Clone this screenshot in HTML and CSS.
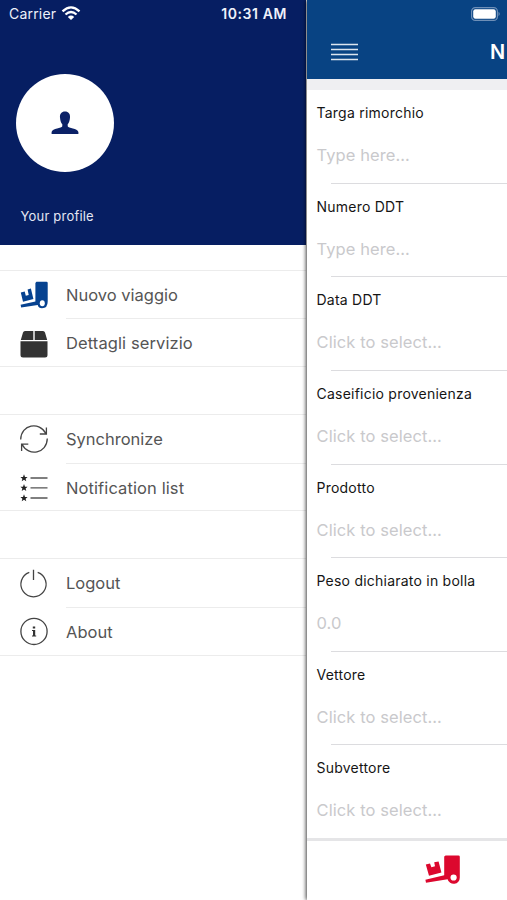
FILE: index.html
```html
<!DOCTYPE html>
<html lang="it">
<head>
<meta charset="utf-8">
<title>Nuovo viaggio</title>
<link rel="stylesheet" href="styles.css">
</head>
<body>
<div class="app">
  <aside class="drawer">
    <header class="profile">
      <div class="status"><span class="carrier">Carrier</span>
        <svg class="wifi" width="20" height="15" viewBox="0 0 20 15" fill="none" stroke="#fff" stroke-width="2.3"><path d="M1.5 5.3Q10-2.5 18.5 5.3"/><path d="M4.5 8.5Q10 3.5 15.5 8.5"/><path d="M10 14L6.8 10.9Q10 8.3 13.2 10.9Z" fill="#fff" stroke="none"/></svg>
        <span class="time">10:31 AM</span></div>
      <div class="avatar"><svg width="28" height="24" viewBox="0 0 28 24"><path fill="#0b2167" d="M14 .5C17.5.5 19.3 3 19 6.5C18.8 10 17.8 12 16.7 13.3V15.2C17.2 17.4 26.5 17 27.4 21V23H.6V21C1.5 17 10.8 17.4 11.3 15.2V13.3C10.2 12 9.2 10 9 6.5C8.7 3 10.5.5 14 .5Z"/></svg></div>
      <p class="profile-name">Your profile</p>
    </header>
    <nav class="menu">
      <ul class="group">
        <li><svg class="icon blue" viewBox="0 0 28 28"><path fill="currentColor" d="M15.4 2 L16.4.8 H26.5 Q27.7.8 27.7 2 V20.5 Q27.7 27.3 22 27.3 Q18.6 27.3 17.7 24 L1.2 26.6 L.6 23.8 L15.4 20.5Z M.8 11.6 L4.7 10.6 L5.8 14.7 L8.7 13.9 L7.6 8.4 L10.9 7.6 L13.4 18 L3 20.8Z"/><ellipse cx="22.3" cy="22.3" rx="2.5" ry="3" fill="#fff"/></svg><span>Nuovo viaggio</span></li>
        <li><svg class="icon" viewBox="0 0 28 28" fill="#333"><path d="M5 1H13.3V10H.8L3 2.6Q3.5 1 5 1ZM14.7 1H23Q24.5 1 25 2.6L27.2 10H14.7ZM.5 11.3H27.5V25Q27.5 27.5 25 27.5H3Q.5 27.5.5 25Z"/></svg><span class="wide">Dettagli servizio</span></li>
      </ul>
      <ul class="group">
        <li><svg class="icon" viewBox="0 0 28 28" fill="none" stroke="#444" stroke-width="1.3"><path d="M.7 14.5C1-.5 19.5-4.2 26 8.8M27.3 13.5C27 28.5 8.5 32.2 2 19.2M26.4 2.5V9H19.8M1.6 26V19.2H8.3"/></svg><span>Synchronize</span></li>
        <li><svg class="icon" viewBox="0 0 28 28"><path d="M10.5 4H27.5M10.5 13.8H27.5M10.5 24H27.5" stroke="#555" stroke-width="1.3"/><g fill="#222"><path id="star" d="M4 .3L5 2.9L7.6 3L5.6 4.7L6.3 7.3L4 5.8L1.7 7.3L2.4 4.7L.4 3L3 2.9Z"/><use href="#star" y="9.8"/><use href="#star" y="20"/></g></svg><span class="wide">Notification list</span></li>
      </ul>
      <ul class="group">
        <li><svg class="icon" viewBox="0 0 28 28" fill="none" stroke="#444" stroke-width="1.3"><path d="M9.3 2.3A12.6 12.6 0 1 0 17.7 2.3M13.5-.3V10"/></svg><span>Logout</span></li>
        <li><svg class="icon" viewBox="0 0 28 28"><g transform="translate(0 -.6)"><circle cx="14" cy="14" r="13.1" fill="none" stroke="#444" stroke-width="1.3"/><path fill="#333" d="M12.8 9H15.2V11.2H12.8ZM12 12.5H15.2V18H16.2V19H12V18H13V13.5H12Z"/></g></svg><span>About</span></li>
      </ul>
    </nav>
  </aside>
  <main class="page">
    <header class="navbar">
      <svg class="battery" width="30" height="14" viewBox="0 0 30 14"><rect x=".6" y=".6" width="25.8" height="12.8" rx="3.7" fill="none" stroke="#6e8fb7" stroke-width="1.2"/><rect x="2.2" y="2.2" width="22.6" height="9.6" rx="2.2" fill="#fff"/><path d="M27.5 4.8Q30 7 27.5 9.2Z" fill="#6e8fb7"/></svg>
      <div class="bar"><svg width="28" height="18" viewBox="0 0 28 18"><path d="M0 1.5H27M0 6.5H27M0 11.5H27M0 16.5H27" stroke="#dce5ef" stroke-width="1.5"/></svg><h1>N</h1></div>
    </header>
    <form class="fields">
      <div class="field"><label>Targa rimorchio</label><p>Type here...</p></div>
      <div class="field"><label>Numero DDT</label><p>Type here...</p></div>
      <div class="field"><label>Data DDT</label><p>Click to select...</p></div>
      <div class="field"><label>Caseificio provenienza</label><p>Click to select...</p></div>
      <div class="field"><label>Prodotto</label><p>Click to select...</p></div>
      <div class="field"><label>Peso dichiarato in bolla</label><p>0.0</p></div>
      <div class="field"><label>Vettore</label><p>Click to select...</p></div>
      <div class="field"><label>Subvettore</label><p>Click to select...</p></div>
    </form>
    <footer class="tabbar"><svg width="36" height="30" viewBox="0 0 36 30"><path fill="#dc082e" d="M19.2 1.6L20.6.4H33.4Q34.8.4 34.8 1.8V22.5A6.2 6.2 0 0 1 22.6 24.2L1 27.8L.4 24.8L19.2 20.2ZM.8 9.6L5 8.4L6.4 12.2L10 11.2L9.2 7.2L13.6 6.4L16.4 17.4L4 20.8Z"/><circle cx="28.6" cy="22.5" r="3.1" fill="#fff"/></svg></footer>
  </main>
</div>
</body>
</html>
```
FILE: styles.css
```css
* { box-sizing: border-box; margin: 0; padding: 0; }
body { font-family: Inter, "Liberation Sans", sans-serif; background: #fff; overflow: hidden; }
.app { display: flex; width: 507px; height: 900px; overflow: hidden; }
.drawer { width: 306px; flex: none; background: #fff; }
.profile { height: 245px; background: #061e62; color: #fff; }
.status { display: flex; align-items: center; height: 27px; padding: 0 19px 0 9px; font-size: 14px; color: #eef1fa; }
.carrier { letter-spacing: .2px; }
.wifi { margin-left: 5px; margin-top: -1px; }
.time { margin-left: auto; font-weight: 600; font-size: 14px; letter-spacing: .6px; }
.avatar { width: 98px; height: 98px; margin: 47px 0 0 15.5px; border-radius: 50%; background: #fff; display: flex; align-items: center; justify-content: center; }
.profile-name { margin: 35px 0 0 20.5px; font-size: 13px; line-height: 18px; letter-spacing: .2px; color: #e3e7f3; }
.menu { display: flex; flex-direction: column; gap: 47px; padding-top: 24.5px; }
.group { list-style: none; border-top: 1px solid #ececec; border-bottom: 1px solid #ececec; height: 97.4px; }
.group li { display: flex; align-items: center; height: 48.7px; padding-left: 20px; }
.group li span { flex: 1; margin-left: 18px; height: 48.7px; line-height: 49px; font-size: 16.5px; color: #555; }
.group li .wide { letter-spacing: .1px; }
.group li:first-child span { border-bottom: 1px solid #ececec; }
.icon { width: 28px; height: 28px; flex: none; overflow: visible; }
.blue { color: #064290; }
.page { position: relative; width: 200.5px; margin-left: .5px; flex: none; display: flex; flex-direction: column; background: #fff; box-shadow: -1px 0 4px rgba(0, 0, 0, .75); }
.navbar { height: 79px; background: #084383; flex: none; }
.battery { display: block; margin: 6.5px 0 0 164px; }
.bar { display: flex; align-items: center; margin-top: 16.5px; height: 30px; padding-left: 24.5px; }
.bar svg { flex: none; }
.bar h1 { margin-left: 131px; font-size: 20px; line-height: 28px; font-weight: 600; color: #fff; }
.fields { border-top: 11px solid #efeff2; height: 759px; flex: none; }
.field { position: relative; height: 93.65px; padding: 13px 0 0 10px; white-space: nowrap; }
.field::after { content: ""; position: absolute; left: 24.5px; right: 0; bottom: 0; height: 1px; background: #dcdcdf; }
.field:last-child::after { display: none; }
.field label { display: block; font-size: 14px; line-height: 20px; color: #151515; letter-spacing: .23px; }
.field p { margin-top: 21px; font-size: 16.5px; line-height: 22px; color: #c9c9cc; letter-spacing: .08px; }
.tabbar { flex: 1; border-top: 3px solid #e5e5e7; padding: 14px 0 0 118.5px; }
.tabbar svg { display: block; }
```
